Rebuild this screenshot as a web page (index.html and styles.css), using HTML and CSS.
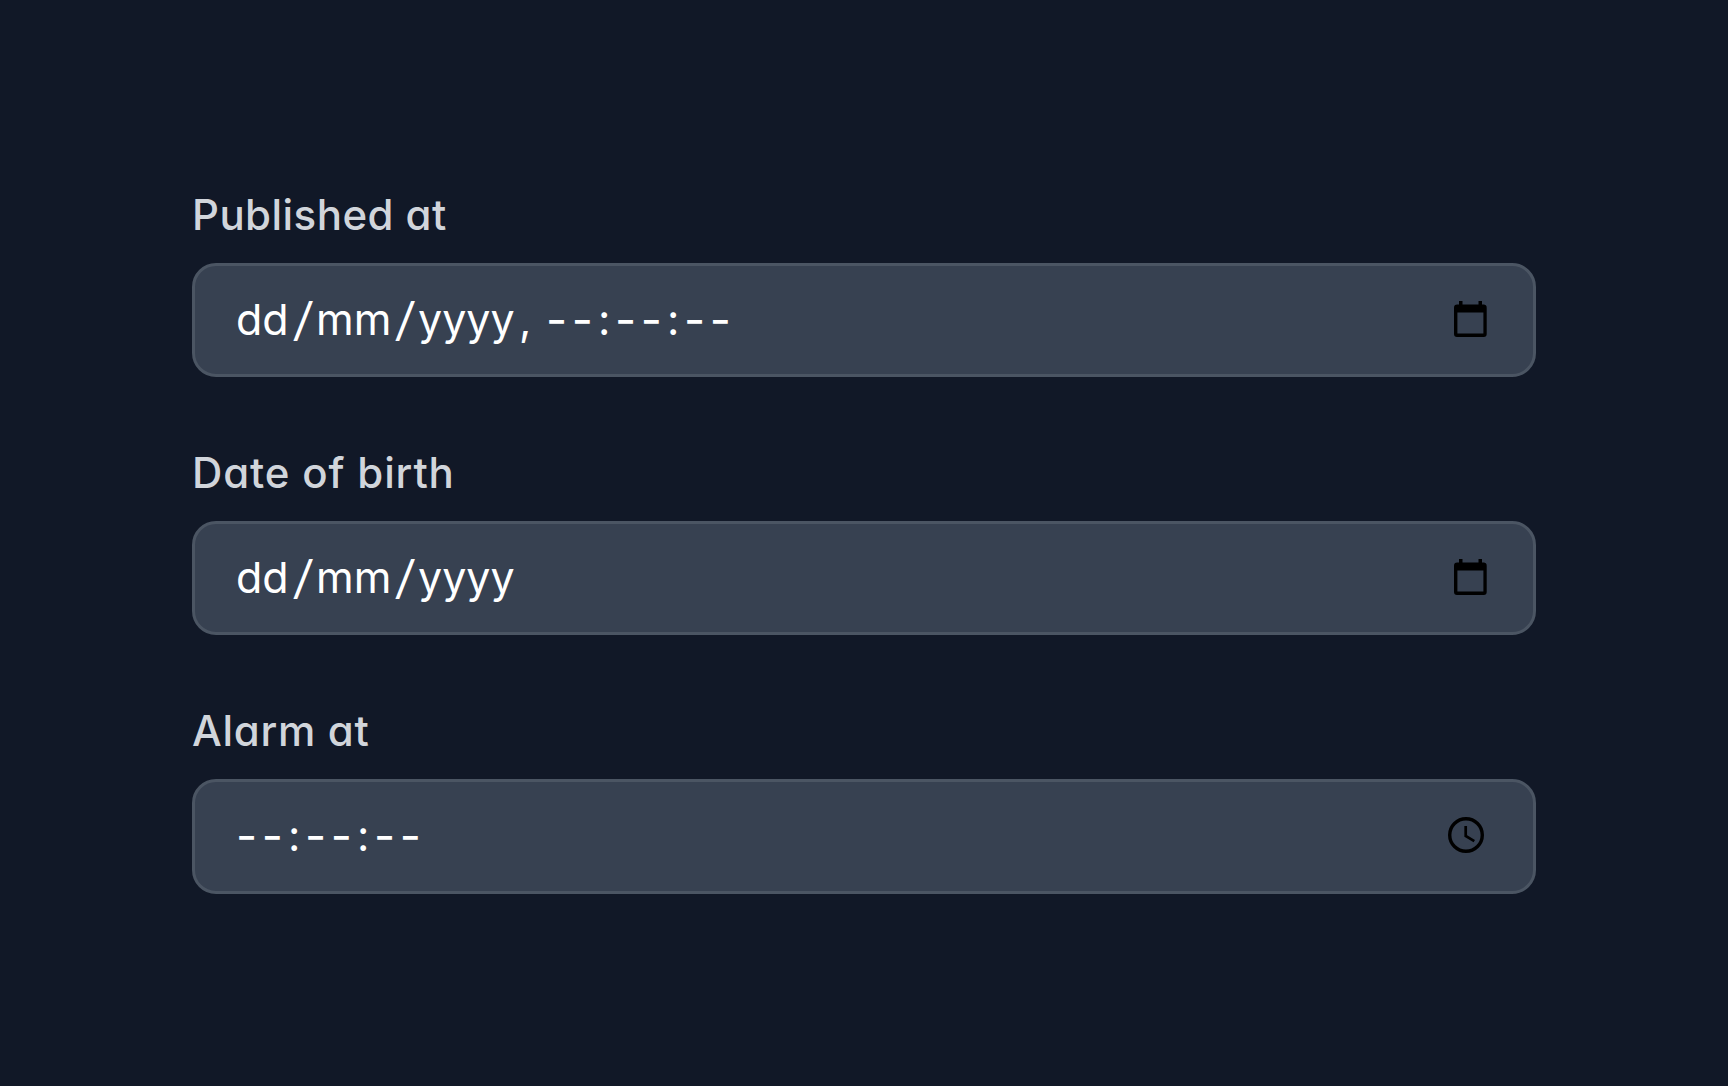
FILE: index.html
```html
<!DOCTYPE html>
<html lang="en">
<head>
<meta charset="utf-8">
<title>Date fields</title>
<link rel="stylesheet" href="styles.css">
</head>
<body>
<form class="form">
  <div class="field">
    <div class="label"><span class="published">Published at</span></div>
    <div class="control">
      <div class="value"><span class="dd">dd</span><span class="slash">/</span><span class="mm">mm</span><span class="slash">/</span><span class="yyyy">yyyy</span><span class="comma">,</span><span class="dash">--</span><span class="colon">:</span><span class="dash">--</span><span class="colon">:</span><span class="dash">--</span></div>
      <svg class="calendar" viewBox="0 0 33 36"><path fill-rule="evenodd" d="M5 0h3.5v3.5h16V0H28v3.5h1.5A3 3 0 0 1 32.7 6.7V33a3 3 0 0 1-3 3H3a3 3 0 0 1-3-3V6.7a3.2 3.2 0 0 1 3.2-3.2H5zM3.4 11.5v21h26v-21z"/></svg>
    </div>
  </div>
  <div class="field">
    <div class="label"><span class="birth">Date of birth</span></div>
    <div class="control">
      <div class="value"><span class="dd">dd</span><span class="slash">/</span><span class="mm">mm</span><span class="slash">/</span><span class="yyyy">yyyy</span></div>
      <svg class="calendar" viewBox="0 0 33 36"><path fill-rule="evenodd" d="M5 0h3.5v3.5h16V0H28v3.5h1.5A3 3 0 0 1 32.7 6.7V33a3 3 0 0 1-3 3H3a3 3 0 0 1-3-3V6.7a3.2 3.2 0 0 1 3.2-3.2H5zM3.4 11.5v21h26v-21z"/></svg>
    </div>
  </div>
  <div class="field">
    <div class="label"><span class="alarm">Alarm at</span></div>
    <div class="control tall">
      <div class="value"><span class="dash">--</span><span class="colon">:</span><span class="dash">--</span><span class="colon">:</span><span class="dash">--</span></div>
      <svg class="clock" viewBox="0 0 36 36"><g fill="none" stroke="#000"><circle cx="18" cy="18" r="16.3" stroke-width="3.4"/><path stroke-width="2.7" d="M17.7 9v10l8.6 5.1"/></g></svg>
    </div>
  </div>
</form>
</body>
</html>
```
FILE: styles.css
```css
* { box-sizing: border-box; }
body {
  margin: 0;
  min-height: 1086px;
  background: #111827;
  font-family: Inter, "Liberation Sans", sans-serif;
  font-feature-settings: "cv11" 1;
}
.form {
  display: flex;
  flex-direction: column;
  gap: 48px;
  padding: 185px 192px 0;
}
.label {
  height: 60px;
  margin-bottom: 18px;
  font-size: 42px;
  line-height: 59px;
  font-weight: 500;
  color: #d1d5db;
  white-space: nowrap;
}
.published { letter-spacing: 0.45px; }
.birth { letter-spacing: 0.85px; }
.alarm { letter-spacing: 0.7px; }
.field:not(:last-child) { height: 210px; }
.control {
  display: flex;
  align-items: center;
  justify-content: space-between;
  height: 114px;
  padding: 0 46px 3px 41px;
  border: 3px solid #4b5563;
  border-radius: 24px;
  background: #374151;
}
.tall { height: 115px; }
.value {
  display: flex;
  height: 60px;
  font-size: 43px;
  line-height: 60px;
  color: #fff;
}
.value span { flex: none; white-space: nowrap; }
.dd { width: 56px; }
.slash {
  width: 24px;
  padding-left: 3px;
  font-size: 46px;
  transform: skewX(-7deg);
}
.mm { width: 78px; }
.yyyy { width: 101px; }
.comma { width: 27px; }
.dash { width: 52px; font-size: 46px; letter-spacing: 4.7px; }
.colon { width: 17px; }
.calendar { width: 33px; height: 36px; }
.clock { width: 36px; height: 36px; margin-right: 3px; }
```
